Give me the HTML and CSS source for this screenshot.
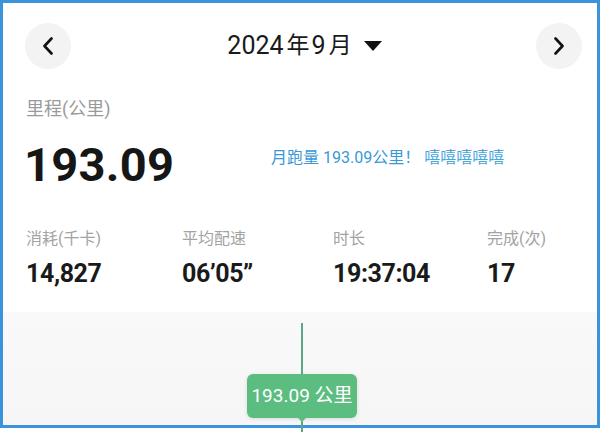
FILE: index.html
```html
<!DOCTYPE html>
<html lang="zh-CN">
<head>
<meta charset="utf-8">
<link rel="stylesheet" href="styles.css">
</head>
<body>
<div class="frame">
  <div class="header">
    <div class="nav-btn">
      <svg width="12" height="18" viewBox="0 0 12 18"><path d="M9.5 1.5 L2.5 9 L9.5 16.5" fill="none" stroke="#111" stroke-width="2.6" stroke-linecap="round" stroke-linejoin="round"/></svg>
    </div>
    <div class="title">2024<span class="cjk">年</span>9<span class="cjk">月</span><span class="caret"></span></div>
    <div class="nav-btn">
      <svg width="12" height="18" viewBox="0 0 12 18"><path d="M2.5 1.5 L9.5 9 L2.5 16.5" fill="none" stroke="#111" stroke-width="2.6" stroke-linecap="round" stroke-linejoin="round"/></svg>
    </div>
  </div>

  <div class="dist-label">里程(公里)</div>
  <div class="dist-row">
    <div class="dist-value">193.09</div>
    <div class="note">月跑量 193.09公里！ <span class="hehe">嘻嘻嘻嘻嘻</span></div>
  </div>

  <div class="stats">
    <div class="stat"><div class="stat-label">消耗(千卡)</div><div class="stat-value">14,827</div></div>
    <div class="stat"><div class="stat-label">平均配速</div><div class="stat-value">06’05”</div></div>
    <div class="stat"><div class="stat-label">时长</div><div class="stat-value">19:37:04</div></div>
    <div class="stat"><div class="stat-label">完成(次)</div><div class="stat-value">17</div></div>
  </div>

  <div class="chart">
    <div class="cursor-line"></div>
    <div class="tooltip">193.09 公里</div>
  </div>
</div>
</body>
</html>
```

FILE: styles.css
```css
html, body {
  margin: 0;
  padding: 0;
  background: #fff;
}
body {
  width: 600px;
  height: 432px;
  overflow: hidden;
  font-family: Roboto, "Noto Sans CJK SC", sans-serif;
  color: #1a1a1a;
}
.frame {
  box-sizing: border-box;
  width: 600px;
  height: 428px;
  border: 3px solid #3b93db;
  display: flex;
  flex-direction: column;
  background: #fff;
}
.header {
  display: flex;
  align-items: center;
  justify-content: space-between;
  padding: 20px 15px 0 22px;
  height: 46px;
}
.nav-btn {
  width: 46px;
  height: 46px;
  border-radius: 50%;
  background: #f3f3f3;
  display: flex;
  align-items: center;
  justify-content: center;
}
.title {
  font-size: 25px;
  line-height: 30px;
  color: #1a1a1a;
  display: flex;
  align-items: center;
  margin-left: 2px;
}
.title .cjk {
  font-size: 23px;
  margin: 0 2px 0 3px;
}
.caret {
  width: 0;
  height: 0;
  border-left: 9px solid transparent;
  border-right: 9px solid transparent;
  border-top: 10px solid #111;
  margin-left: 10px;
}
.dist-label {
  margin: 28px 0 0 23px;
  font-size: 18px;
  line-height: 24px;
  color: #9a9a9a;
}
.dist-row {
  display: grid;
  grid-template-columns: 247px 1fr;
  margin-top: 19px;
  padding-left: 21px;
}
.dist-value {
  font-size: 47px;
  line-height: 50px;
  font-weight: 700;
  letter-spacing: 0.3px;
  color: #161616;
}
.note {
  margin-top: 7px;
  font-size: 16px;
  line-height: 22px;
  color: #3b98d6;
}
.note .hehe {
  color: #4aa6dc;
}
.stats {
  display: grid;
  grid-template-columns: 156px 151px 154px 1fr;
  margin-top: 38px;
  padding-left: 23px;
}
.stat-label {
  font-size: 16px;
  line-height: 22px;
  color: #a3a3a3;
}
.stat-value {
  margin-top: 10px;
  font-size: 25px;
  line-height: 28px;
  font-weight: 700;
  letter-spacing: -0.4px;
  color: #1a1a1a;
}
.chart {
  flex: 1;
  margin-top: 24px;
  position: relative;
  background: linear-gradient(#f9f9f9, #f6f6f6);
}
.cursor-line {
  position: absolute;
  left: 298px;
  top: 11px;
  bottom: -7px;
  width: 2px;
  background: #5fa586;
}
.tooltip {
  position: absolute;
  left: 244px;
  top: 62px;
  width: 110px;
  height: 44px;
  box-sizing: border-box;
  border-radius: 6px;
  background: #5cbd80;
  color: #fff;
  font-size: 19px;
  line-height: 44px;
  text-align: center;
  box-shadow: 0 1px 4px rgba(0,0,0,0.12);
}
.tooltip::after {
  content: "";
  position: absolute;
  left: 50%;
  bottom: -4px;
  margin-left: -4px;
  border-left: 4px solid transparent;
  border-right: 4px solid transparent;
  border-top: 4px solid #5cbd80;
}
```
